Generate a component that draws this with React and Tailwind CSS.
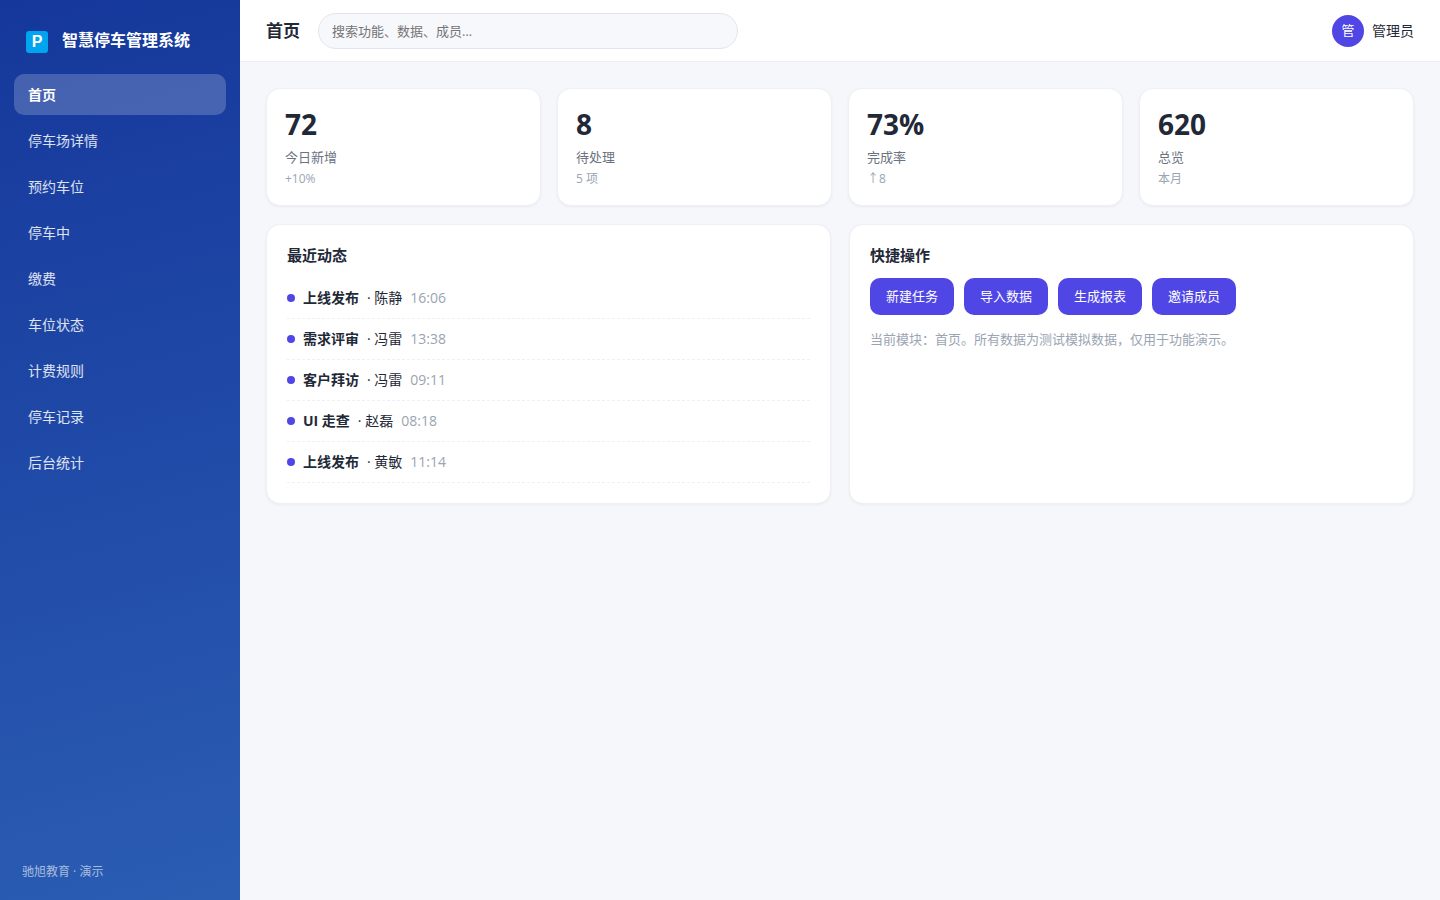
import clsx from 'clsx'

const navItems = [
  '首页',
  '停车场详情',
  '预约车位',
  '停车中',
  '缴费',
  '车位状态',
  '计费规则',
  '停车记录',
  '后台统计',
]

const stats = [
  { value: '72', label: '今日新增', note: '+10%' },
  { value: '8', label: '待处理', note: '5 项' },
  { value: '73%', label: '完成率', note: '↑8' },
  { value: '620', label: '总览', note: '本月' },
]

const activities = [
  { title: '上线发布', user: '陈静', time: '16:06' },
  { title: '需求评审', user: '冯雷', time: '13:38' },
  { title: '客户拜访', user: '冯雷', time: '09:11' },
  { title: 'UI 走查', user: '赵磊', time: '08:18' },
  { title: '上线发布', user: '黄敏', time: '11:14' },
]

const actions = ['新建任务', '导入数据', '生成报表', '邀请成员']

function Sidebar({ active }) {
  return (
    <aside className="flex w-60 shrink-0 flex-col bg-[linear-gradient(165deg,#15379b,#2b5db3)] px-3.5 pt-[27px] pb-5 text-white">
      <div className="flex items-end gap-3.5 px-3">
        <span className="flex h-[22px] w-[22px] items-center justify-center rounded-[3px] bg-[#00a4ef] font-['Liberation_Sans',sans-serif] text-base leading-[22px] font-bold">
          P
        </span>
        <span className="text-base leading-[26px] font-bold">智慧停车管理系统</span>
      </div>
      <nav className="mt-[21px] flex flex-col gap-[5px]">
        {navItems.map((item) => (
          <a
            key={item}
            href="#"
            className={clsx(
              'rounded-[10px] px-3.5 py-2.5 text-sm leading-[21px]',
              item === active ? 'bg-white/20 font-bold text-white' : 'text-white/85'
            )}
          >
            {item}
          </a>
        ))}
      </nav>
      <div className="mt-auto px-2 text-xs leading-4 text-white/60">驰旭教育 · 演示</div>
    </aside>
  )
}

function Header({ title }) {
  return (
    <header className="flex items-center gap-[18px] border-b border-[#eceef3] bg-white px-[26px] pt-[13px] pb-3">
      <h1 className="text-[17px] leading-6 font-bold">{title}</h1>
      <input
        type="search"
        aria-label="搜索"
        placeholder="搜索功能、数据、成员…"
        className="h-9 w-[420px] rounded-full border border-[#e2e5ee] bg-[#f7f8fc] px-[13px] text-[13px] outline-none placeholder:text-[#757575]"
      />
      <div className="ml-auto flex items-center gap-2">
        <span className="flex h-8 w-8 items-center justify-center rounded-full bg-[#4f46e5] text-[13px] text-white">
          管
        </span>
        <span className="text-sm">管理员</span>
      </div>
    </header>
  )
}

function StatCard({ value, label, note }) {
  return (
    <div className="rounded-[14px] border border-[#eef0f5] bg-white p-[18px] shadow-[0_1px_3px_rgba(15,23,42,0.05)]">
      <div className="text-[28px] leading-[34px] font-bold">{value}</div>
      <div className="mt-1.5 text-[13px] leading-5 text-[#6b7280]">{label}</div>
      <div className="mt-1 text-xs leading-4 text-[#9aa4b2]">{note}</div>
    </div>
  )
}

function Panel({ title, children }) {
  return (
    <section className="rounded-[14px] border border-[#eef0f5] bg-white p-5 shadow-[0_1px_3px_rgba(15,23,42,0.05)]">
      <h2 className="mb-[13px] text-[15px] leading-5 font-bold">{title}</h2>
      {children}
    </section>
  )
}

export default function App() {
  return (
    <div className="flex min-h-screen bg-[#f5f7fb] font-['Open_Sans','Noto_Sans_CJK_SC',sans-serif] text-[#1f2937]">
      <Sidebar active="首页" />
      <div className="min-w-0 flex-1">
        <Header title="首页" />
        <main className="flex flex-col gap-[18px] p-[26px]">
          <div className="grid grid-cols-4 gap-4">
            {stats.map((stat) => (
              <StatCard key={stat.label} {...stat} />
            ))}
          </div>
          <div className="grid grid-cols-2 gap-[18px]">
            <Panel title="最近动态">
              <ul>
                {activities.map((activity, i) => (
                  <li
                    key={i}
                    className="flex items-center gap-2 border-b border-dashed border-[#eef0f3] py-2.5 text-sm"
                  >
                    <span className="h-2 w-2 rounded-full bg-[#4f46e5]" />
                    <strong>{activity.title}</strong>
                    <span>· {activity.user}</span>
                    <time className="text-[#9aa4b2]">{activity.time}</time>
                  </li>
                ))}
              </ul>
            </Panel>
            <Panel title="快捷操作">
              <div className="flex flex-wrap gap-2.5">
                {actions.map((action) => (
                  <button
                    key={action}
                    type="button"
                    className="h-[37px] rounded-[10px] bg-[#4f46e5] px-4 text-[13px] text-white"
                  >
                    {action}
                  </button>
                ))}
              </div>
              <p className="mt-3.5 text-[13px] leading-5 text-[#9aa4b2]">
                当前模块：首页。所有数据为测试模拟数据，仅用于功能演示。
              </p>
            </Panel>
          </div>
        </main>
      </div>
    </div>
  )
}
